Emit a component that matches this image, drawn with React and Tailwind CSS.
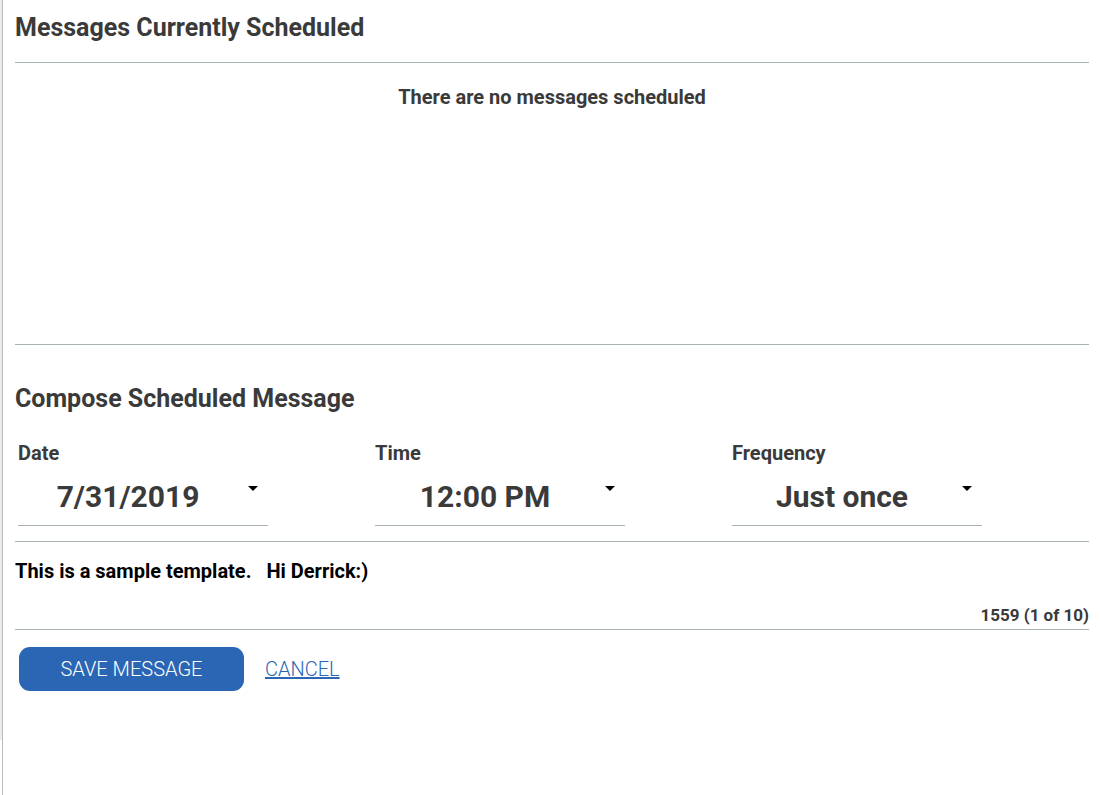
import React from 'react';

const Caret = () => (
  <svg width="10" height="6" viewBox="0 0 10 6" className="absolute right-[10px] top-[11px]">
    <path d="M0 0 L10 0 L5 5 Z" fill="#000" />
  </svg>
);

const SelectField = ({ label, value }) => (
  <div className="pl-[3px]">
    <div className="text-[20px] font-bold text-[#3a3a3a] leading-[22px]">{label}</div>
    <div className="relative w-[250px] h-[51px] mt-[11px] border-b border-[#aab3b3]">
      <div className="pr-[30px] text-center text-[30px] font-bold text-[#3a3a3a] leading-[44px]">{value}</div>
      <Caret />
    </div>
  </div>
);

export default function App() {
  return (
    <div className="flex min-h-[795px] bg-white" style={{ fontFamily: 'Roboto, "Liberation Sans", sans-serif' }}>
      <div className="w-[2px] h-[740px] bg-[#ececec]" />
      <div className="w-[1px] bg-[#b5bdbd]" />
      <div className="flex-1 pl-[12px] pr-[11px]">
        <h2 className="pt-[14px] pb-[20px] text-[25px] font-bold text-[#3a3a3a] leading-[28px]">
          Messages Currently Scheduled
        </h2>
        <div className="border-t border-[#aab3b3] h-[282px]">
          <p className="pt-[23px] text-center text-[20px] font-bold text-[#3a3a3a] leading-[22px]">
            There are no messages scheduled
          </p>
        </div>
        <div className="border-t border-[#aab3b3]">
          <h2 className="pt-[40px] text-[25px] font-bold text-[#3a3a3a] leading-[28px]">
            Compose Scheduled Message
          </h2>
          <div className="grid grid-cols-[357px_357px_1fr] mt-[29px] pb-[15px] border-b border-[#aab3b3]">
            <SelectField label="Date" value="7/31/2019" />
            <SelectField label="Time" value="12:00 PM" />
            <SelectField label="Frequency" value="Just once" />
          </div>
          <p className="pt-[18px] text-[20px] font-bold text-black leading-[22px] whitespace-pre">
            {'This is a sample template.   Hi Derrick:)'}
          </p>
          <div className="pt-[23px] pb-[4px] text-right text-[17px] font-bold text-[#3a3a3a] leading-[20px] border-b border-[#aab3b3]">
            1559 (1 of 10)
          </div>
          <div className="flex items-center gap-[21px] pt-[17px] pl-[4px]">
            <button className="w-[225px] h-[44px] rounded-[11px] bg-[#2a66b4] text-white text-[20px] font-light uppercase">
              Save Message
            </button>
            <a href="#" className="text-[20px] font-light text-[#2a66b4] underline uppercase">
              Cancel
            </a>
          </div>
        </div>
      </div>
    </div>
  );
}
